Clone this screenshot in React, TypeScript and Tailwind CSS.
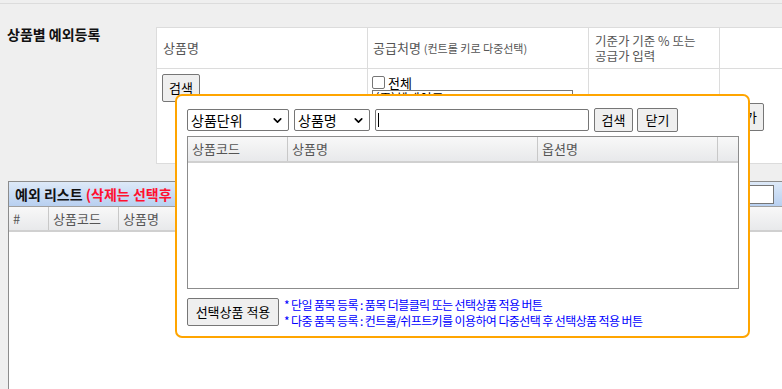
import { ChevronDown } from 'lucide-react'

const font = { fontFamily: '"Noto Sans CJK KR", "Noto Sans", sans-serif' }

function Select({ label, w }: { label: string; w: string }) {
  return (
    <div
      className={`flex h-[22px] ${w} items-center justify-between rounded-[2px] border border-[#767676] bg-white pl-[3px] pr-[4px] text-[14px] text-black`}
    >
      <span>{label}</span>
      <ChevronDown size={13} strokeWidth={3} />
    </div>
  )
}

function Btn({ children, className = '' }: { children: React.ReactNode; className?: string }) {
  return (
    <button
      className={`flex items-center justify-center rounded-[2px] border border-[#767676] bg-[#efefef] text-[13px] text-black ${className}`}
    >
      {children}
    </button>
  )
}

export default function App() {
  return (
    <div className="relative h-[389px] w-[782px] overflow-hidden bg-[#efefef]" style={font}>
      <div className="h-[4px] border-b border-[#dcdcdc]" />

      {/* 상단 등록 영역 */}
      <div className="flex pt-[23px]">
        <div className="-mt-[1px] w-[156px] shrink-0 pl-[7px] text-[14px] font-bold leading-[16px] text-[#111]">
          상품별 예외등록
        </div>
        <table className="shrink-0 border-collapse bg-white text-[13px] text-[#555]">
          <tbody>
            <tr className="h-[41px]">
              <td className="w-[211px] min-w-[211px] border border-[#dcdcdc] px-[6px] align-middle">상품명</td>
              <td className="w-[221px] min-w-[221px] border border-[#dcdcdc] px-[5px] align-middle">
                공급처명 <span className="text-[11px]">(컨트롤 키로 다중선택)</span>
              </td>
              <td className="w-[131px] min-w-[131px] border border-[#dcdcdc] px-[6px] align-middle text-[12.5px] leading-[15px]">
                <div>기준가 기준 % 또는</div>
                <div>공급가 입력</div>
              </td>
              <td className="w-[100px] min-w-[100px] border border-[#dcdcdc]" />
            </tr>
            <tr className="h-[95px]">
              <td className="border border-[#dcdcdc] px-[5px] pt-[5px] align-top">
                <Btn className="h-[28px] w-[38px]">검색</Btn>
              </td>
              <td className="border border-[#dcdcdc] px-[4px] pt-[6px] align-top">
                <div className="flex h-[15px] items-center gap-[3px] text-[13px] leading-[15px] text-black">
                  <span className="h-[13px] w-[13px] rounded-[2px] border border-[#767676] bg-white" />
                  전체
                </div>
                <div className="h-[40px] w-[201px] border border-[#767676] bg-white px-[2px] text-[13px] leading-[14px] text-black">
                  (주)헤메이드
                </div>
              </td>
              <td className="border border-[#dcdcdc]" />
              <td className="border border-[#dcdcdc] pl-[6px] pt-[34px] align-top">
                <Btn className="h-[28px] w-[38px]">추가</Btn>
              </td>
            </tr>
          </tbody>
        </table>
      </div>

      {/* 예외 리스트 */}
      <div className="ml-[8px] mt-[17px] border-l border-t border-[#8c8c8c]">
        <div className="flex h-[24px] items-center justify-between bg-gradient-to-b from-[#dde9f8] to-[#b8d0f0] pl-[6px] pr-[8px] text-[14px] font-bold">
          <span className="whitespace-nowrap">
            <span className="text-[#111]">예외 리스트 </span>
            <span className="text-[#ff1030]">(삭제는 선택후 Delete 키)</span>
          </span>
          <div className="h-[19px] w-[27px] border border-[#767676] bg-white" />
        </div>
        <div className="flex h-[26px] border-t border-[#a0a0a0] border-b-2 border-b-[#d0d0d0] bg-gradient-to-b from-[#f8f8f8] to-[#e8e9eb] text-[13px] text-[#555]">
          <div className="flex w-[40px] items-center border-r border-[#c8c8c8] pl-[4px]">#</div>
          <div className="flex w-[70px] items-center border-r border-[#c8c8c8] pl-[4px]">상품코드</div>
          <div className="flex flex-1 items-center pl-[4px]">상품명</div>
        </div>
        <div className="h-[200px] bg-white" />
      </div>

      {/* 상품 검색 팝업 */}
      <div className="absolute left-[175px] top-[94px] h-[244px] w-[575px] rounded-[7px] border-2 border-[#ffa500] bg-white pl-[10px] pr-[10px] pt-[12px]">
        <div className="flex items-center">
          <Select label="상품단위" w="w-[102px]" />
          <div className="w-[5px]" />
          <Select label="상품명" w="w-[76px]" />
          <div className="w-[5px]" />
          <div className="flex h-[22px] w-[214px] items-center rounded-[2px] border border-[#767676] bg-white pl-[2px]">
            <span className="h-[14px] w-px bg-black" />
          </div>
          <Btn className="ml-[5px] h-[24px] w-[39px]">검색</Btn>
          <Btn className="ml-[4px] h-[24px] w-[41px]">닫기</Btn>
        </div>

        <div className="mt-[4px] flex h-[153px] w-[552px] flex-col border border-[#8c8c8c]">
          <div className="flex h-[26px] border-b-2 border-[#d0d0d0] bg-gradient-to-b from-[#f8f8f8] to-[#e8e9eb] text-[13px] text-[#555]">
            <div className="flex w-[100px] items-center border-r border-[#c8c8c8] pl-[4px]">상품코드</div>
            <div className="flex w-[250px] items-center border-r border-[#c8c8c8] pl-[4px]">상품명</div>
            <div className="flex w-[180px] items-center border-r border-[#c8c8c8] pl-[4px]">옵션명</div>
            <div className="w-[18px]" />
          </div>
          <div className="flex-1 bg-white" />
        </div>

        <div className="mt-[9px] flex items-start">
          <Btn className="h-[28px] w-[92px]">선택상품 적용</Btn>
          <div className="-mt-[1px] ml-[5px] text-[12px] leading-[16px] tracking-[-0.6px] text-[#0000ff]">
            <div>* 단일 품목 등록 : 품목 더블클릭 또는 선택상품 적용 버튼</div>
            <div>* 다중 품목 등록 : 컨트롤/쉬프트키를 이용하여 다중선택 후 선택상품 적용 버튼</div>
          </div>
        </div>
      </div>
    </div>
  )
}
